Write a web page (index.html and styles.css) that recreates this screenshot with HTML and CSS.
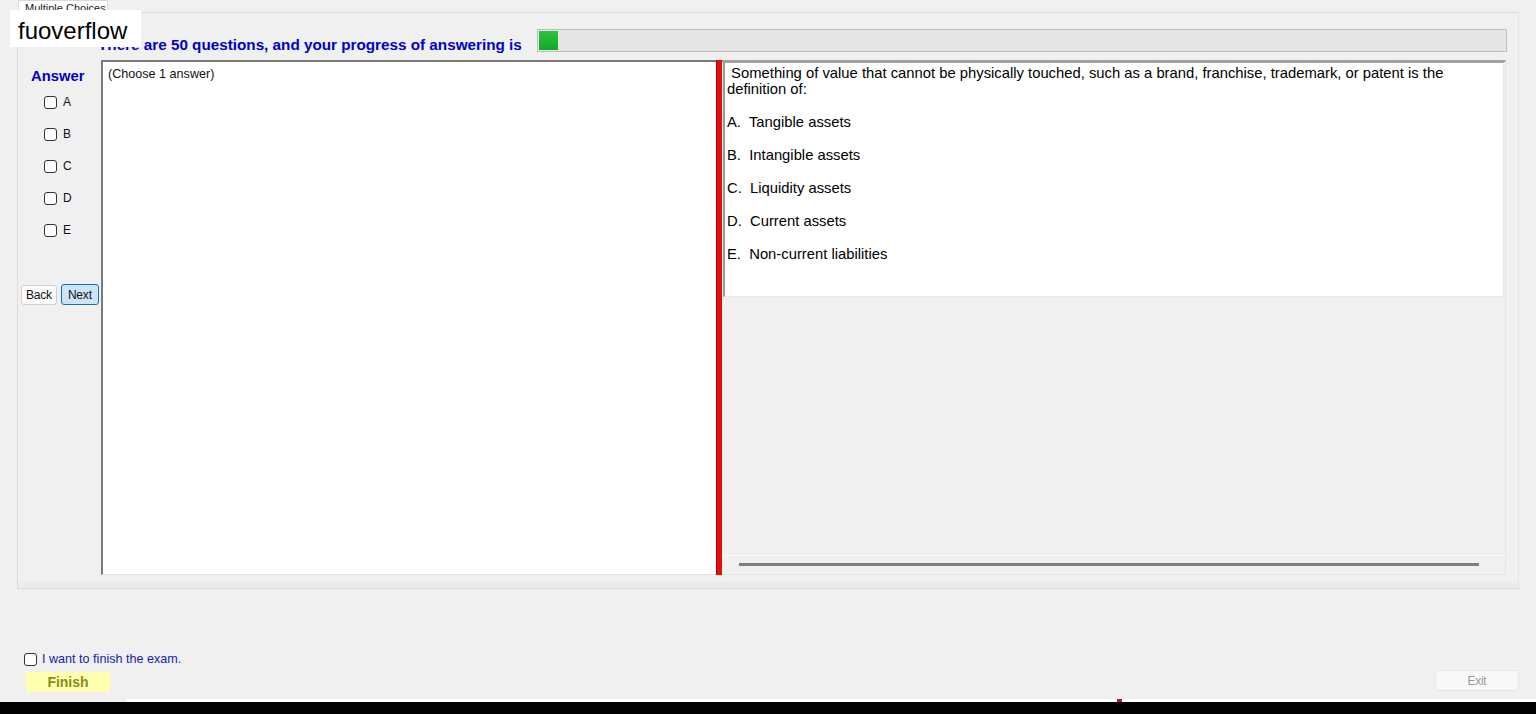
FILE: index.html
```html
<!DOCTYPE html>
<html lang="en">
<head>
  <meta charset="UTF-8" />
  <title>Multiple Choices</title>
  <link rel="stylesheet" href="styles.css">
</head>
<body>

  <div class="brand">fuoverflow</div>

  <div class="tab">Multiple Choices</div>

  <div class="panel">
    <div class="progress-row">
      <h2>There are 50 questions, and your progress of answering is</h2>
      <div class="progress"><div class="progress-fill" style="width: 2%"></div></div>
    </div>

    <div class="work">
      <div class="answers">
        <h3>Answer</h3>
        <label class="choice"><input type="checkbox"> A</label>
        <label class="choice"><input type="checkbox"> B</label>
        <label class="choice"><input type="checkbox"> C</label>
        <label class="choice"><input type="checkbox"> D</label>
        <label class="choice"><input type="checkbox"> E</label>
        <div class="nav">
          <button class="btn">Back</button>
          <button class="btn btn-active">Next</button>
        </div>
      </div>

      <div class="note">(Choose 1 answer)</div>

      <div class="splitter"></div>

      <div class="question">
        <div class="question-box">
          <p class="stem">&nbsp;Something of value that cannot be physically touched, such as a brand, franchise, trademark, or patent is the definition of:</p>
          <p class="opt">A.&nbsp; Tangible assets</p>
          <p class="opt">B.&nbsp; Intangible assets</p>
          <p class="opt">C.&nbsp; Liquidity assets</p>
          <p class="opt">D.&nbsp; Current assets</p>
          <p class="opt">E.&nbsp; Non-current liabilities</p>
        </div>
        <div class="question-fill"></div>
        <div class="hscroll"><div class="hscroll-thumb"></div></div>
      </div>
    </div>
  </div>

  <div class="footer">
    <div class="finish-row">
      <label class="confirm"><input type="checkbox"> I want to finish the exam.</label>
      <button class="finish">Finish</button>
    </div>
    <button class="exit">Exit</button>
  </div>

  <div class="taskbar-edge"><span class="mark"></span></div>
  <div class="taskbar"></div>

</body>
</html>
```

FILE: styles.css
```css
* {
  box-sizing: border-box;
  margin: 0;
  padding: 0;
}

body {
  font-family: 'Liberation Sans', Arial, sans-serif;
  background: #f0f0f0;
  color: #000;
  width: 1536px;
  height: 714px;
  overflow: hidden;
  position: relative;
}

/* watermark label over the top-left corner */
.brand {
  position: absolute;
  left: 10px;
  top: 10px;
  width: 131px;
  height: 37px;
  background: #fff;
  font-size: 24px;
  padding: 9px 0 0 8px;
  line-height: 24px;
  z-index: 5;
}

.tab {
  margin-left: 18px;
  width: 90px;
  height: 12px;
  background: #fff;
  border: 1px solid #d9d9d9;
  border-bottom: none;
  font-size: 11px;
  line-height: 12px;
  padding-left: 6px;
  overflow: hidden;
  color: #222;
  padding-top: 1px;
}

.panel {
  margin-left: 17px;
  width: 1502px;
  height: 577px;
  border: 1px solid #dcdcdc;
  border-right-color: #e4e4e4;
  box-shadow: inset 0 -6px 0 #ececec;
}

.progress-row {
  display: flex;
  align-items: flex-end;
  height: 39px;
  padding-top: 15px;
}

.progress-row h2 {
  font-size: 15.25px;
  font-weight: 700;
  color: #0000c8;
  margin-left: 80px;
  width: 439px;
  line-height: 15px;
  padding-bottom: 0;
  white-space: nowrap;
}

.progress {
  width: 970px;
  height: 23px;
  background: #e6e6e6;
  border: 1px solid #bcbcbc;
  padding: 1px;
}

.progress-fill {
  height: 100%;
  background: linear-gradient(#2fc33f, #12a826);
}

.work {
  display: flex;
  margin-top: 8px;
  height: 515px;
}

.answers {
  width: 83px;
  display: flex;
  flex-direction: column;
}

.answers h3 {
  font-size: 14.8px;
  font-weight: 700;
  color: #0000c8;
  margin: 9px 0 0 13px;
  line-height: 15px;
}

.choice {
  display: flex;
  align-items: center;
  gap: 6px;
  font-size: 12px;
  color: #111;
  margin-left: 26px;
  height: 32px;
}

.choice:first-of-type {
  margin-top: 2px;
}

input[type="checkbox"] {
  appearance: none;
  width: 13px;
  height: 13px;
  border: 1px solid #333;
  border-radius: 3px;
  background: #fff;
  flex: none;
}

.nav {
  display: flex;
  gap: 4px;
  margin: 39px 0 0 3px;
}

.btn {
  font-family: inherit;
  font-size: 12px;
  height: 20px;
  padding: 0 4px;
  background: #fdfdfd;
  border: 1px solid #d0d0d0;
  border-radius: 3px;
  color: #111;
  letter-spacing: -0.2px;
}

.btn-active {
  background: #cce4f7;
  border-color: #1c6ea8;
  height: 21px;
  margin-top: -1px;
  padding: 0 6px;
}

.note {
  width: 615px;
  background: #fff;
  border-top: 2px solid #7a7a7a;
  border-left: 2px solid #7a7a7a;
  border-bottom: 1px solid #e0e0e0;
  font-size: 12.6px;
  padding: 5px 5px;
  color: #111;
}

.splitter {
  width: 6px;
  background: #e01010;
  border-left: 1px solid #b00000;
}

.question {
  width: 784px;
  display: flex;
  flex-direction: column;
  border-top: 2px solid #a0a0a0;
  border-bottom: 1px solid #e4e4e4;
  border-right: 1px solid #e4e4e4;
}

.question-box {
  margin-left: 1px;
  width: 781px;
  height: 235px;
  background: #fff;
  border-top: 1px solid #a0a0a0;
  border-left: 2px solid #9a9a9a;
  border-right: 1px solid #e8e8e8;
  border-bottom: 1px solid #e8e8e8;
  padding: 2px 0 0 2px;
  font-size: 14.8px;
  line-height: 16px;
}

.stem {
  width: 740px;
  margin-bottom: 17px;
}

.opt {
  margin-bottom: 17px;
}

.question-fill {
  flex: 1;
  border-bottom: 1px solid #fafafa;
}

.hscroll {
  height: 18px;
  padding: 7px 0 0 17px;
}

.hscroll-thumb {
  width: 740px;
  height: 3px;
  background: #7e7e7e;
}

.footer {
  display: flex;
  justify-content: space-between;
  align-items: flex-end;
  height: 103px;
  padding: 0 17px 0 24px;
}

.finish-row {
  display: flex;
  flex-direction: column;
  gap: 6px;
}

.confirm {
  display: flex;
  align-items: center;
  gap: 5px;
  font-size: 12.6px;
  color: #2020b0;
}

.finish {
  margin-left: 2px;
  width: 84px;
  height: 20px;
  border: none;
  background: #ffffb0;
  font-family: inherit;
  font-size: 14px;
  font-weight: 700;
  color: #8c8c1c;
}

.exit {
  width: 84px;
  height: 21px;
  margin-bottom: 1px;
  background: #f8f8f8;
  border: 1px solid #e6e6e6;
  border-radius: 3px;
  font-family: inherit;
  font-size: 12px;
  color: #9a9a9a;
  letter-spacing: -0.3px;
}

.taskbar-edge {
  margin-top: 7px;
  margin-left: 126px;
  height: 3px;
  background: #fff;
  position: relative;
}

.mark {
  position: absolute;
  left: 991px;
  top: 0;
  width: 5px;
  height: 3px;
  background: #c0103a;
}

.taskbar {
  height: 12px;
  background: #000;
}
```
